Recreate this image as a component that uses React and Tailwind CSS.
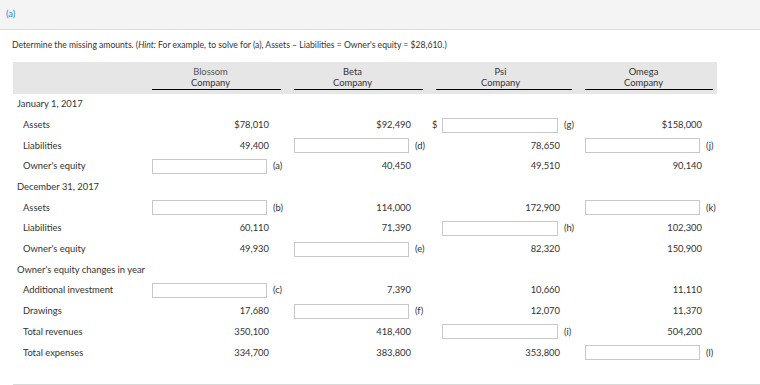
const grid = 'grid grid-cols-[126px_129px_129px_136px_128px] gap-x-[13px]';

const companies = ['Blossom', 'Beta', 'Psi', 'Omega'];

const sections = [
  {
    title: 'January 1, 2017',
    rows: [
      ['Assets', '$78,010', '$92,490', { tag: 'g', dollar: true }, '$158,000'],
      ['Liabilities', '49,400', { tag: 'd' }, '78,650', { tag: 'j' }],
      ["Owner's equity", { tag: 'a' }, '40,450', '49,510', '90,140'],
    ],
  },
  {
    title: 'December 31, 2017',
    rows: [
      ['Assets', { tag: 'b' }, '114,000', '172,900', { tag: 'k' }],
      ['Liabilities', '60,110', '71,390', { tag: 'h' }, '102,300'],
      ["Owner's equity", '49,930', { tag: 'e' }, '82,320', '150,900'],
    ],
  },
  {
    title: "Owner's equity changes in year",
    rows: [
      ['Additional investment', { tag: 'c' }, '7,390', '10,660', '11,110'],
      ['Drawings', '17,680', { tag: 'f' }, '12,070', '11,370'],
      ['Total revenues', '350,100', '418,400', { tag: 'i' }, '504,200'],
      ['Total expenses', '334,700', '383,800', '353,800', { tag: 'l' }],
    ],
  },
];

const Cell = ({ value, psi }) => {
  const isInput = typeof value === 'object';
  return (
    <div className="flex items-center h-full">
      {psi && (value.dollar ? (
        <span className="w-[10px] -ml-[4px] shrink-0">$</span>
      ) : (
        <span className="w-[6px] shrink-0" />
      ))}
      <div className={`${psi ? 'w-[118px]' : 'w-[117px]'} shrink-0 text-right`}>
        {isInput ? (
          <input
            type="text"
            className={`block ${psi ? 'w-[116px]' : 'w-[115px]'} h-[15px] bg-white border border-[#c8c8c8] outline-none`}
          />
        ) : (
          value
        )}
      </div>
      {isInput && <span className="ml-[4px]">({value.tag})</span>}
    </div>
  );
};

export default function App() {
  return (
    <div className="w-[760px] h-[385px] bg-white text-[#333] text-[9.4px] font-['Lato',_'Liberation_Sans',_sans-serif] overflow-hidden">
      <div className="h-[30px] bg-[#f4f4f4] border-b border-[#dcdcdc] flex items-center pl-[6px]">
        <span className="text-[#2a87d4]">(a)</span>
      </div>

      <p className="mt-[9px] ml-[12px] leading-[12px] text-[8.6px]">
        Determine the missing amounts. (<i>Hint:</i> For example, to solve for (a), Assets – Liabilities = Owner's equity = $28,610.)
      </p>

      <div className="ml-[13px] mt-[11px] w-[704px]">
        <div className={`${grid} h-[32px] bg-[#e6e6e6] pb-[4px] items-end`}>
          <div />
          {companies.map((name, i) => (
            <div key={name} className={`border-b border-black ${i === 2 ? 'pl-[6px]' : ''}`}>
              <div className="w-[117px] text-center leading-[11px] pb-[1px]">
                <div className={i === 0 ? 'text-[#555]' : ''}>{name}</div>
                <div>Company</div>
              </div>
            </div>
          ))}
        </div>

        {sections.map((section) => (
          <div key={section.title}>
            <div className="h-[20.7px] flex items-center pl-[4px]">{section.title}</div>
            {section.rows.map((row) => (
              <div key={section.title + row[0]} className={`${grid} h-[20.7px]`}>
                <div className="flex items-center pl-[10px]">{row[0]}</div>
                {row.slice(1).map((value, i) => (
                  <Cell key={i} value={value} psi={i === 2} />
                ))}
              </div>
            ))}
          </div>
        ))}
      </div>

      <div className="ml-[13px] mt-[21px] border-t border-[#d9d9d9]" />
    </div>
  );
}
